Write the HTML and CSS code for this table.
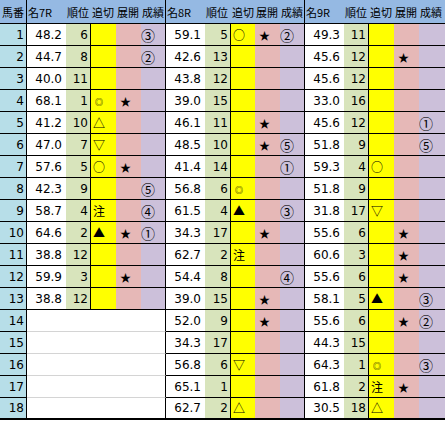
FILE: index.html
```html
<!DOCTYPE html>
<html lang="ja">
<head>
<meta charset="utf-8">
<title>馬番表</title>
<link rel="stylesheet" href="styles.css">
</head>
<body>
<table class="sheet">
<colgroup>
<col class="w27"><col class="w39"><col class="w25"><col class="w25"><col class="w25"><col class="w25">
<col class="w39"><col class="w26"><col class="w24"><col class="w25"><col class="w25">
<col class="w39"><col class="w25"><col class="w25"><col class="w25"><col class="w26">
</colgroup>
<thead>
<tr class="hrow">
<th class="hb">馬番</th><th>名7R</th><th>順位</th><th>追切</th><th>展開</th><th class="hs">成績</th>
<th>名8R</th><th>順位</th><th>追切</th><th>展開</th><th class="hs">成績</th>
<th>名9R</th><th>順位</th><th>追切</th><th>展開</th><th>成績</th>
</tr>
</thead>
<tbody>
<tr><td class="b">1</td><td class="n">48.2</td><td class="r">6</td><td class="o"></td><td class="t"></td><td class="s">③</td><td class="n">59.1</td><td class="r">5</td><td class="o">○</td><td class="t">★</td><td class="s">②</td><td class="n">49.3</td><td class="r">11</td><td class="o"></td><td class="t"></td><td class="s end"></td></tr>
<tr><td class="b">2</td><td class="n">44.7</td><td class="r">8</td><td class="o"></td><td class="t"></td><td class="s">②</td><td class="n">42.6</td><td class="r">13</td><td class="o"></td><td class="t"></td><td class="s"></td><td class="n">45.6</td><td class="r">12</td><td class="o"></td><td class="t">★</td><td class="s end"></td></tr>
<tr><td class="b">3</td><td class="n">40.0</td><td class="r">11</td><td class="o"></td><td class="t"></td><td class="s"></td><td class="n">43.8</td><td class="r">12</td><td class="o"></td><td class="t"></td><td class="s"></td><td class="n">45.6</td><td class="r">12</td><td class="o"></td><td class="t"></td><td class="s end"></td></tr>
<tr><td class="b">4</td><td class="n">68.1</td><td class="r">1</td><td class="o"><span class="dm">◎</span></td><td class="t">★</td><td class="s"></td><td class="n">39.0</td><td class="r">15</td><td class="o"></td><td class="t"></td><td class="s"></td><td class="n">33.0</td><td class="r">16</td><td class="o"></td><td class="t"></td><td class="s end"></td></tr>
<tr><td class="b">5</td><td class="n">41.2</td><td class="r">10</td><td class="o">△</td><td class="t"></td><td class="s"></td><td class="n">46.1</td><td class="r">11</td><td class="o"></td><td class="t">★</td><td class="s"></td><td class="n">45.6</td><td class="r">12</td><td class="o"></td><td class="t"></td><td class="s end">①</td></tr>
<tr><td class="b">6</td><td class="n">47.0</td><td class="r">7</td><td class="o">▽</td><td class="t"></td><td class="s"></td><td class="n">48.5</td><td class="r">10</td><td class="o"></td><td class="t">★</td><td class="s">⑤</td><td class="n">51.8</td><td class="r">9</td><td class="o"></td><td class="t"></td><td class="s end">⑤</td></tr>
<tr><td class="b">7</td><td class="n">57.6</td><td class="r">5</td><td class="o">○</td><td class="t">★</td><td class="s"></td><td class="n">41.4</td><td class="r">14</td><td class="o"></td><td class="t"></td><td class="s">①</td><td class="n">59.3</td><td class="r">4</td><td class="o">○</td><td class="t"></td><td class="s end"></td></tr>
<tr><td class="b">8</td><td class="n">42.3</td><td class="r">9</td><td class="o"></td><td class="t"></td><td class="s">⑤</td><td class="n">56.8</td><td class="r">6</td><td class="o"><span class="dm">◎</span></td><td class="t"></td><td class="s"></td><td class="n">51.8</td><td class="r">9</td><td class="o"></td><td class="t"></td><td class="s end"></td></tr>
<tr><td class="b">9</td><td class="n">58.7</td><td class="r">4</td><td class="o">注</td><td class="t"></td><td class="s">④</td><td class="n">61.5</td><td class="r">4</td><td class="o">▲</td><td class="t"></td><td class="s">③</td><td class="n">31.8</td><td class="r">17</td><td class="o">▽</td><td class="t"></td><td class="s end"></td></tr>
<tr><td class="b">10</td><td class="n">64.6</td><td class="r">2</td><td class="o">▲</td><td class="t">★</td><td class="s">①</td><td class="n">34.3</td><td class="r">17</td><td class="o"></td><td class="t">★</td><td class="s"></td><td class="n">55.6</td><td class="r">6</td><td class="o"></td><td class="t">★</td><td class="s end"></td></tr>
<tr><td class="b">11</td><td class="n">38.8</td><td class="r">12</td><td class="o"></td><td class="t"></td><td class="s"></td><td class="n">62.7</td><td class="r">2</td><td class="o">注</td><td class="t"></td><td class="s"></td><td class="n">60.6</td><td class="r">3</td><td class="o"></td><td class="t">★</td><td class="s end"></td></tr>
<tr><td class="b">12</td><td class="n">59.9</td><td class="r">3</td><td class="o"></td><td class="t">★</td><td class="s"></td><td class="n">54.4</td><td class="r">8</td><td class="o"></td><td class="t"></td><td class="s">④</td><td class="n">55.6</td><td class="r">6</td><td class="o"></td><td class="t">★</td><td class="s end"></td></tr>
<tr><td class="b">13</td><td class="n">38.8</td><td class="r">12</td><td class="o"></td><td class="t"></td><td class="s"></td><td class="n">39.0</td><td class="r">15</td><td class="o"></td><td class="t">★</td><td class="s"></td><td class="n">58.1</td><td class="r">5</td><td class="o">▲</td><td class="t"></td><td class="s end">③</td></tr>
<tr><td class="b">14</td><td class="x"></td><td class="x"></td><td class="x"></td><td class="x"></td><td class="x xs"></td><td class="n">52.0</td><td class="r">9</td><td class="o"></td><td class="t">★</td><td class="s"></td><td class="n">55.6</td><td class="r">6</td><td class="o"></td><td class="t">★</td><td class="s end">②</td></tr>
<tr><td class="b">15</td><td class="x"></td><td class="x"></td><td class="x"></td><td class="x"></td><td class="x xs"></td><td class="n">34.3</td><td class="r">17</td><td class="o"></td><td class="t"></td><td class="s"></td><td class="n">44.3</td><td class="r">15</td><td class="o"></td><td class="t"></td><td class="s end"></td></tr>
<tr><td class="b">16</td><td class="x"></td><td class="x"></td><td class="x"></td><td class="x"></td><td class="x xs"></td><td class="n">56.8</td><td class="r">6</td><td class="o">▽</td><td class="t"></td><td class="s"></td><td class="n">64.3</td><td class="r">1</td><td class="o"><span class="dm">◎</span></td><td class="t"></td><td class="s end">③</td></tr>
<tr><td class="b">17</td><td class="x"></td><td class="x"></td><td class="x"></td><td class="x"></td><td class="x xs"></td><td class="n">65.1</td><td class="r">1</td><td class="o"></td><td class="t"></td><td class="s"></td><td class="n">61.8</td><td class="r">2</td><td class="o">注</td><td class="t">★</td><td class="s end"></td></tr>
<tr class="last"><td class="b">18</td><td class="x"></td><td class="x"></td><td class="x"></td><td class="x"></td><td class="x xs"></td><td class="n">62.7</td><td class="r">2</td><td class="o">△</td><td class="t"></td><td class="s"></td><td class="n">30.5</td><td class="r">18</td><td class="o">△</td><td class="t"></td><td class="s end"></td></tr>
</tbody>
</table>
</body>
</html>
```
FILE: styles.css
```css
html, body {
  margin: 0;
  padding: 0;
  background: #fff;
}
body {
  overflow: hidden;
}
.sheet {
  border-collapse: separate;
  border-spacing: 0;
  table-layout: fixed;
  width: 445px;
  font-family: "DejaVu Sans", "Noto Sans CJK JP", sans-serif;
  font-size: 12px;
  color: #000;
}
.w24 { width: 24px; }
.w25 { width: 25px; }
.w26 { width: 26px; }
.w27 { width: 27px; }
.w39 { width: 39px; }

.sheet th,
.sheet td {
  padding: 0;
  white-space: nowrap;
  overflow: hidden;
  line-height: 16px;
  vertical-align: middle;
  border: 0;
  border-bottom: 1px solid #000;
}
.hrow { height: 24px; }
.sheet tbody tr { height: 22px; }

.sheet th {
  background: #95b9e3;
  font-family: "Noto Sans CJK JP", sans-serif;
  font-weight: normal;
  font-size: 11px;
  letter-spacing: 0;
  text-align: left;
  padding-left: 1px;
}
.sheet th.hb,
.sheet th.hs {
  border-right: 1px solid #000;
}
.sheet th.hb {
  padding-left: 2px;
}

.b {
  background: #b7dee8;
  text-align: right;
  padding-right: 2px !important;
  border-right: 1px solid #000 !important;
}
.n {
  background: #fff;
  text-align: right;
  padding-right: 4px !important;
}
.r {
  background: #d8e4bc;
  text-align: right;
  padding-right: 2px !important;
  border-right: 1px solid #000 !important;
}
.o, .t, .s {
  font-family: "Noto Sans CJK JP", sans-serif;
  text-align: left;
  padding-left: 2px !important;
}
.o {
  background: #ffff00;
  font-size: 12px;
}
.t {
  background: #e6b8b7;
  font-size: 11px;
  padding-left: 4px !important;
}
.s {
  background: #ccc0da;
  font-family: "Noto Sans CJK JP", sans-serif;
  font-size: 14px;
  padding-left: 0 !important;
  border-right: 1px solid #000 !important;
}
.s.end {
  border-right: 0 !important;
}
.dm {
  font-size: 8px;
  padding-left: 2px;
}
.x {
  background: #fff;
  border-bottom: 1px solid #d4d4d4 !important;
  border-right: 1px solid #d4d4d4;
}
.x.xs {
  border-right: 1px solid #000;
}
.sheet tr.last td {
  border-bottom: 2px solid #000 !important;
}
```
